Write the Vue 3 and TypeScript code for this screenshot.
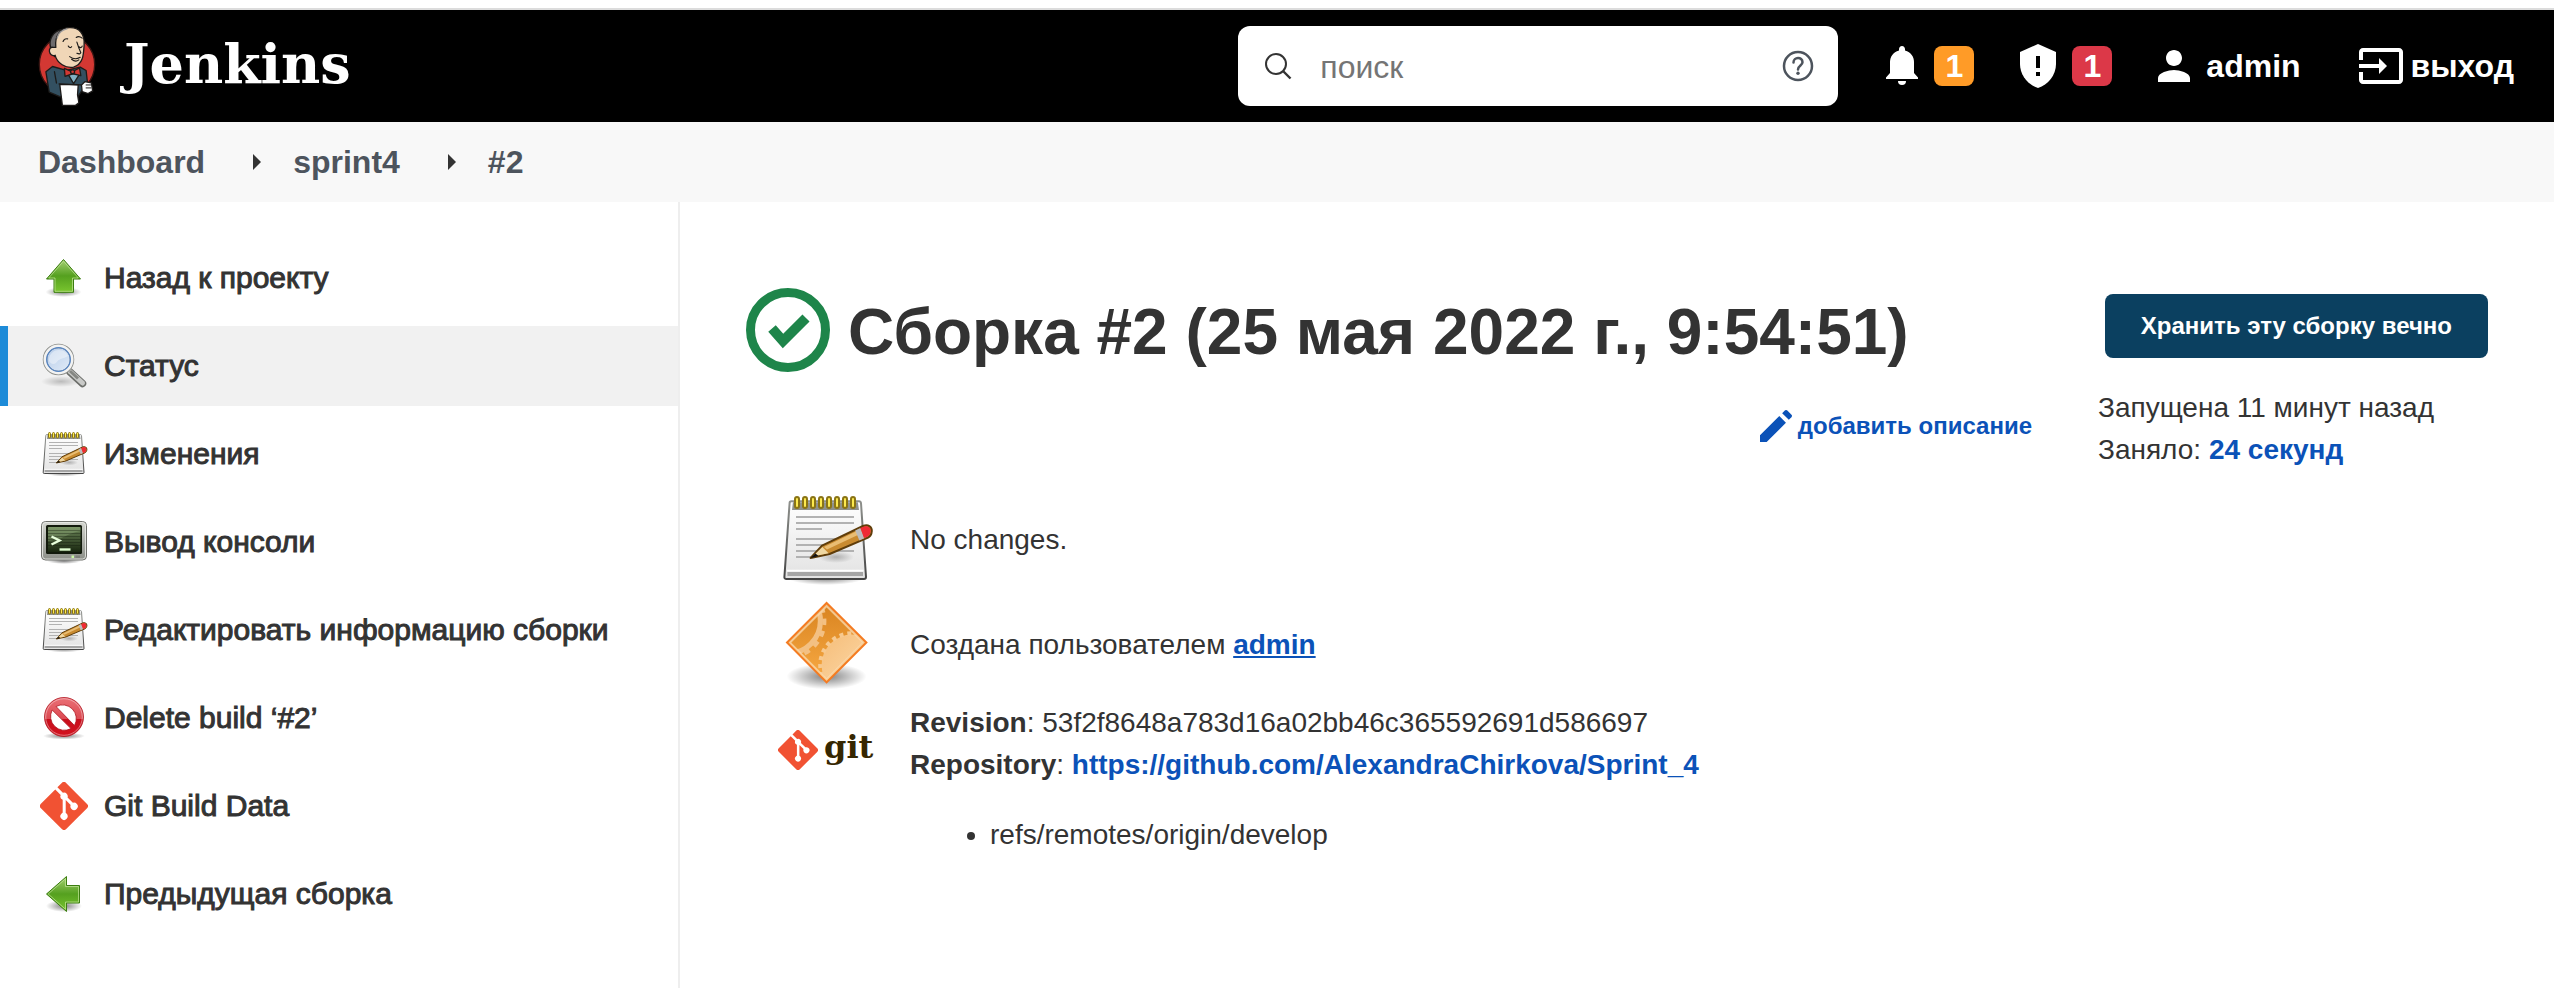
<script setup lang="ts">
import { ref } from 'vue'

interface Task {
  label: string
  icon: string
  active?: boolean
}

const query = ref<string>('')

const crumbs: string[] = ['Dashboard', 'sprint4', '#2']

const tasks: Task[] = [
  { label: 'Назад к проекту', icon: 'up' },
  { label: 'Статус', icon: 'search', active: true },
  { label: 'Изменения', icon: 'notepad' },
  { label: 'Вывод консоли', icon: 'terminal' },
  { label: 'Редактировать информацию сборки', icon: 'notepad' },
  { label: 'Delete build ‘#2’', icon: 'forbidden' },
  { label: 'Git Build Data', icon: 'git' },
  { label: 'Предыдущая сборка', icon: 'previous' },
]
</script>

<template>
  <div class="page">
    <svg class="sprite" aria-hidden="true">
      <defs>
        <linearGradient id="g-green" x1="0" y1="0" x2="0" y2="1">
          <stop offset="0" stop-color="#a5d173" />
          <stop offset=".5" stop-color="#55a01f" />
          <stop offset="1" stop-color="#7ac62f" />
        </linearGradient>
        <linearGradient id="g-lens" x1="0" y1="0" x2="1" y2="1">
          <stop offset="0" stop-color="#b5cbe8" />
          <stop offset="1" stop-color="#e3edf8" />
        </linearGradient>
        <linearGradient id="g-paper" x1="0" y1="0" x2="0" y2="1">
          <stop offset="0" stop-color="#ffffff" />
          <stop offset="1" stop-color="#e2e2e2" />
        </linearGradient>
        <linearGradient id="g-edge" x1="0" y1="0" x2="0" y2="1">
          <stop offset="0" stop-color="#8f918d" />
          <stop offset="1" stop-color="#454545" />
        </linearGradient>
        <linearGradient id="g-case" x1="0" y1="0" x2="0" y2="1">
          <stop offset="0" stop-color="#d5d7d1" />
          <stop offset="1" stop-color="#8c8f88" />
        </linearGradient>
        <linearGradient id="g-screen" x1="0" y1="0" x2="0" y2="1">
          <stop offset="0" stop-color="#6a8457" />
          <stop offset="1" stop-color="#18260f" />
        </linearGradient>
        <linearGradient id="g-red" x1="0" y1="0" x2="0" y2="1">
          <stop offset="0" stop-color="#ea7076" />
          <stop offset=".55" stop-color="#dc4a52" />
          <stop offset=".56" stop-color="#c80f1c" />
          <stop offset="1" stop-color="#d3121f" />
        </linearGradient>
        <linearGradient id="g-orange" x1="0" y1="0" x2="0" y2="1">
          <stop offset="0" stop-color="#d8831f" />
          <stop offset="1" stop-color="#f9ab45" />
        </linearGradient>
        <linearGradient id="g-gear" x1="0" y1="0" x2="1" y2="1">
          <stop offset="0" stop-color="#f5bd78" />
          <stop offset="1" stop-color="#ffe1b8" />
        </linearGradient>
        <radialGradient id="g-shadow">
          <stop offset="0" stop-color="#000" stop-opacity=".5" />
          <stop offset="1" stop-color="#000" stop-opacity="0" />
        </radialGradient>
        <clipPath id="c-diamond">
          <path d="M24.3 4.6 42.6 22.8 24.3 41.1 6 22.8Z" />
        </clipPath>
      </defs>

      <symbol id="i-up" viewBox="0 0 48 48">
        <ellipse cx="23.5" cy="38" rx="18" ry="5" fill="url(#g-shadow)" />
        <path d="M23.5 5.5 40.5 25H33.5V38.3H14V25H6.5Z" fill="url(#g-green)" stroke="#3b7d10" />
        <path d="M23.5 7.2 38.3 24H32.5V37.3H15V24H8.7Z" fill="none" stroke="#c3e59a" stroke-opacity=".7" />
      </symbol>

      <symbol id="i-previous" viewBox="0 0 48 48">
        <ellipse cx="24" cy="36" rx="18" ry="6" fill="url(#g-shadow)" />
        <path d="M6.5 24 26.5 6.5V15.5H39.5V33H26.5V41.5Z" fill="url(#g-green)" stroke="#3b7d10" />
        <path d="M8.2 24 25.5 8.7V16.5H38.5V32H25.5V39.3Z" fill="none" stroke="#c3e59a" stroke-opacity=".7" />
      </symbol>

      <symbol id="i-search" viewBox="0 0 48 48">
        <ellipse cx="21" cy="39.500" rx="20" ry="5.500" fill="url(#g-shadow)" opacity=".45" />
        <path d="M30 30 42.500 41.500" stroke="#6c6e6a" stroke-width="7.500" stroke-linecap="round" />
        <path d="M30 29.500 42.500 41" stroke="#c9cac8" stroke-width="5" stroke-linecap="round" />
        <path d="M30 29 38 36.500" stroke="#858783" stroke-width="3" />
        <circle cx="18.500" cy="17.500" r="13.500" fill="url(#g-lens)" stroke="#8a8c88" stroke-width="4.500" />
        <circle cx="18.500" cy="17.500" r="13.500" fill="none" stroke="#f3f3f2" stroke-width="3" />
        <circle cx="18.500" cy="17.500" r="11.800" fill="none" stroke="#5685c4" stroke-width="1.300" />
        <path d="M9 19a10 10 0 0 1 10-11c5 0 8 3 9 6-5 3-9 2-12 7-3 2-5 1-7-2Z" fill="#fff" opacity=".4" />
      </symbol>

      <symbol id="i-notepad" viewBox="0 0 48 48">
        <ellipse cx="24" cy="43" rx="19" ry="3.500" fill="url(#g-shadow)" />
        <path d="M6.700 4.600H40.500Q41.400 4.600 41.500 5.600L44 42.500Q44 43.500 43 43.500H4.200Q3.100 43.500 3.200 42.400L5.800 5.500Q5.800 4.600 6.700 4.600Z" fill="url(#g-paper)" stroke="url(#g-edge)" />
        <path d="M7.500 5.100H39.900L40.500 9H7Z" fill="#8f918d" />
        <path d="M4.500 39.300H42.800" stroke="#fff" stroke-width=".8" />
        <path d="M4.700 41H42.500" stroke="#a5a5a5" stroke-width="2" />
        <path d="M9 12.500H38M9 15.500H38M9 18.500H22M9 23.500H34M9 26.500H30M9 29.500H38M9 32.500H18" stroke="#b2b2b2" />
        <ellipse cx="29" cy="32.500" rx="9" ry="3" fill="url(#g-shadow)" opacity=".5" />
        <g fill="#fce94f" stroke="#8a7415">
          <rect v-for="n in 8" :key="n" :x="4.500 + n * 4" y="2.500" width="2" height="5.500" rx="1" />
        </g>
        <path d="M16.300 33 22 26.800 42.500 17C45 16 47 17.200 46.900 19.500 46.800 21.200 46 22.300 45 22.800L25.800 31Z" fill="#c98b30" stroke="#5f3d0a" stroke-linejoin="round" />
        <path d="M23 27.500 40 19.300 41 21 24.500 28.800Z" fill="#e9bd73" />
        <path d="M17.300 32.300 22.200 27.500 25.300 30.600Z" fill="#efd7a2" />
        <path d="M16.300 33 18.700 30.700 20.300 32Z" fill="#111" />
        <path d="M38.600 19.300 41.200 18 43.200 23.100 40.700 24.200Z" fill="#bcbcbc" />
        <path d="M41.200 18 43 17.300C45.200 16.600 46.400 18 46.300 19.500 46.200 21.200 45.500 22 44.700 22.400L43 23Z" fill="#ef2b35" />
      </symbol>

      <symbol id="i-terminal" viewBox="0 0 48 48">
        <ellipse cx="24" cy="43" rx="17" ry="3" fill="url(#g-shadow)" />
        <rect x="1.500" y="3.500" width="45" height="38.500" rx="4" fill="url(#g-case)" stroke="#6f716c" />
        <rect x="2.500" y="4.500" width="43" height="36.500" rx="3" fill="none" stroke="#eceeea" stroke-opacity=".8" />
        <rect x="6" y="7" width="36" height="29" rx="1.500" fill="#121a0c" />
        <rect x="8" y="9" width="32.500" height="25" rx="1" fill="url(#g-screen)" />
        <path d="M8 9H40.500V13C28 15 22 22 8 23Z" fill="#b5cf9b" opacity=".25" />
        <path d="M8 12.500H40.500M8 15.500H40.500M8 18.500H40.500M8 21.500H40.500M8 24.500H40.500M8 27.500H40.500" stroke="#0d1708" stroke-opacity=".35" />
        <path d="M11.500 18.500 19.500 22.500 11.500 26.500" fill="none" stroke="#e8ffdc" stroke-width="2.400" />
        <path d="M19.500 31.500H30.500" stroke="#e0ffd0" stroke-width="2.400" />
        <rect x="31.500" y="37.500" width="2.500" height="2.500" fill="#c8f7a2" />
        <rect x="35.500" y="37.500" width="4.500" height="2.500" fill="#7d8079" />
      </symbol>

      <symbol id="i-forbidden" viewBox="0 0 48 48">
        <ellipse cx="24" cy="42" rx="21" ry="3.500" fill="url(#g-shadow)" />
        <circle cx="24" cy="23" r="17" fill="#fff" />
        <path fill-rule="evenodd" d="M24 3.500a19.500 19.500 0 1 1 0 39 19.500 19.500 0 0 1 0-39ZM16 12.500 34.500 31.500A13.800 13.800 0 0 0 16 12.500ZM12.200 16A13.800 13.800 0 0 0 31 34.600Z" fill="url(#g-red)" stroke="#b01520" stroke-width=".8" />
        <circle cx="24" cy="23" r="18.300" fill="none" stroke="#fff" stroke-opacity=".45" stroke-width=".9" />
      </symbol>

      <symbol id="i-git" viewBox="0 0 92 92">
        <path fill="#f15233" d="M90.156 41.965 50.036 1.848a5.918 5.918 0 0 0-8.372 0l-8.328 8.332 10.566 10.566a7.030 7.030 0 0 1 7.230 1.684 7.034 7.034 0 0 1 1.669 7.277l10.187 10.184a7.028 7.028 0 0 1 7.278 1.672 7.040 7.040 0 0 1 0 9.957 7.050 7.050 0 0 1-9.965 0 7.044 7.044 0 0 1-1.528-7.660l-9.500-9.497V59.360a7.040 7.040 0 0 1 1.860 11.290 7.040 7.040 0 0 1-9.957 0 7.040 7.040 0 0 1 0-9.958 7.060 7.060 0 0 1 2.304-1.539V33.926a7.049 7.049 0 0 1-3.820-9.234L29.242 14.272 1.730 41.777a5.918 5.918 0 0 0 0 8.371L41.852 90.270a5.925 5.925 0 0 0 8.370 0l39.934-39.934a5.925 5.925 0 0 0 0-8.371Z" />
      </symbol>

      <symbol id="i-gears" viewBox="0 0 48 48">
        <ellipse cx="24.300" cy="39.700" rx="20" ry="6.500" fill="url(#g-shadow)" />
        <path d="M24.300 3 44.200 22.800 24.300 42.700 4.500 22.800Z" fill="url(#g-orange)" stroke="#f57b22" />
        <g clip-path="url(#c-diamond)" fill="none">
          <circle cx="5" cy="12" r="16.200" stroke="#f3c083" stroke-width="2.600" />
          <circle cx="5" cy="12" r="18.200" stroke="#f3c083" stroke-width="2" stroke-dasharray="3 3" stroke-dashoffset="1" />
          <circle cx="37" cy="34" r="15.200" fill="url(#g-gear)" />
          <circle cx="37" cy="34" r="15.800" stroke="#f7c98f" stroke-width="2.200" stroke-dasharray="2 2" />
        </g>
        <path d="M24.300 4.500 42.700 22.800 24.300 41.200 6 22.800Z" fill="none" stroke="#fbdcb4" stroke-opacity=".75" />
      </symbol>
    </svg>

    <header class="header">
      <a class="brand" href="#">
        <svg class="butler" viewBox="54 44 176 244" aria-hidden="true">
          <ellipse cx="142" cy="160" rx="84" ry="88" fill="#d33833" stroke="#3b1512" stroke-width="4" />
          <g stroke="#1d1b1a" stroke-width="4" stroke-linejoin="round" stroke-linecap="round">
            <path d="M98 166 78 182 88 244 122 258 176 256 204 214 200 178 182 168 140 178Z" fill="#335061" />
            <path d="M142 184 162 218 182 186Z" fill="#81b0c4" />
            <path d="M92 108C86 84 100 60 124 54L140 52 122 74 112 104 104 136Z" fill="#6d6b6d" />
            <path d="M108 108C104 72 122 50 148 48 180 46 196 68 194 100 192 130 192 158 162 168 138 172 112 156 106 132 86 138 82 104 100 108Z" fill="#f0d6b7" />
            <path d="M112 80C114 64 130 54 142 52" fill="none" stroke="#9b9a9b" />
            <path d="M130 90Q134 80 144 82M170 78Q178 72 188 80M146 104Q152 112 156 106M178 106Q186 112 188 104M172 92Q178 112 184 124 182 130 172 126M150 136Q166 148 182 138M156 144Q168 154 178 146" fill="none" stroke-width="3.500" />
            <path d="M134 172 158 182 180 170 184 194 160 188 136 196Z" fill="#d33833" />
            <circle cx="159" cy="182" r="6" fill="#d33833" />
            <path d="M104 182 110 216" fill="none" />
            <path d="M186 222 196 212 216 216 220 240 206 248 188 242Z" fill="#fff" />
            <path d="M200 222H214M200 231H215" fill="none" stroke-width="3" />
            <path d="M120 220 176 222 174 252 178 276 168 284 128 284Z" fill="#fff" />
            <path d="M118 219 184 222" fill="none" />
          </g>
        </svg>
        <span class="wordmark">Jenkins</span>
      </a>

      <form class="search" role="search" @submit.prevent>
        <svg class="search-icon" viewBox="0 0 28 28" fill="none" stroke="#333" stroke-width="2" aria-hidden="true">
          <circle cx="12" cy="12" r="10" />
          <path d="M19 19 26.500 26.500" stroke-width="2.400" />
        </svg>
        <input v-model="query" type="search" placeholder="поиск" aria-label="поиск" />
        <a class="help" href="#" aria-label="Справка">
          <svg viewBox="0 0 32 32" fill="none" stroke="#4d545d" stroke-width="2.500" aria-hidden="true">
            <circle cx="16" cy="16" r="14" />
            <path d="M11.500 12.500C11.500 6.500 20.500 6.500 20.500 12.200 20.500 15.500 16 15.500 16 19.600" stroke-linecap="round" />
            <circle cx="16" cy="23.300" r="1.700" fill="#4d545d" stroke="none" />
          </svg>
        </a>
      </form>

      <nav class="account" aria-label="Учётная запись">
        <button class="alert" type="button">
          <svg class="bell" viewBox="0 0 32 40" fill="#fff" aria-hidden="true">
            <path d="M16 0C17.800 0 19 1.500 19 3.300V4.500C25 6 28 11 28 16V27L32 31.500V33H0V31.500L4 27V16C4 11 7 6 13 4.500V3.300C13 1.500 14.200 0 16 0Z" />
            <path d="M12 35H20A4 4 0 0 1 12 35Z" />
          </svg>
          <span class="badge orange">1</span>
        </button>
        <button class="alert" type="button">
          <svg class="shield" viewBox="0 0 36 44" aria-hidden="true">
            <path d="M18 0 36 8V20C36 31 28 41 18 44 8 41 0 31 0 20V8Z" fill="#fff" />
            <path d="M16 12H20V24H16ZM16 28H20V32H16Z" fill="#000" />
          </svg>
          <span class="badge red">1</span>
        </button>
        <a class="user" href="#">
          <svg viewBox="4 4 16 16" fill="#fff" aria-hidden="true">
            <path d="M12 12c2.210 0 4-1.790 4-4s-1.790-4-4-4-4 1.790-4 4 1.790 4 4 4zm0 2c-2.670 0-8 1.340-8 4v2h16v-2c0-2.660-5.330-4-8-4z" />
          </svg>
          admin
        </a>
        <a class="logout" href="#">
          <svg viewBox="1 3 22 18" fill="#fff" aria-hidden="true">
            <path d="M21 3.010H3c-1.100 0-2 .9-2 2V9h2V4.990h18v14.030H3V15H1v4.010c0 1.100.9 1.980 2 1.980h18c1.100 0 2-.88 2-1.980v-14c0-1.110-.9-2-2-2zM11 16l4-4-4-4v3H1v2h10v3z" />
          </svg>
          выход
        </a>
      </nav>
    </header>

    <nav class="crumbs" aria-label="Путь">
      <template v-for="(crumb, i) in crumbs" :key="crumb">
        <svg v-if="i > 0" viewBox="0 0 8 16" fill="#333" aria-hidden="true"><path d="M0 0 8 8 0 16Z" /></svg>
        <a href="#">{{ crumb }}</a>
      </template>
    </nav>

    <div class="body">
      <nav class="tasks" aria-label="Меню сборки">
        <a v-for="task in tasks" :key="task.label" href="#" class="task" :class="{ active: task.active }">
          <svg aria-hidden="true"><use :href="'#i-' + task.icon" /></svg>
          {{ task.label }}
        </a>
      </nav>

      <main class="main">
        <section class="build">
          <h1>
            <svg viewBox="0 0 84 84" aria-hidden="true">
              <circle cx="42" cy="42" r="37.500" fill="none" stroke="#1e854a" stroke-width="9" />
              <path d="M26 40.500 37 53 60 30" fill="none" stroke="#1e854a" stroke-width="10" />
            </svg>
            <span>Сборка #2 (25 мая 2022 г., 9:54:51)</span>
          </h1>

          <a class="describe" href="#">
            <svg viewBox="3 3 18 18" fill="#0b52b8" aria-hidden="true">
              <path d="M3 17.250V21h3.750L17.600 10.150l-3.750-3.750L3 17.250zM20.710 7.040c.39-.39.39-1.020 0-1.410l-2.340-2.340c-.39-.39-1.020-.39-1.410 0l-1.500 1.500 3.750 3.750 1.500-1.500z" />
            </svg>
            добавить описание
          </a>

          <ul class="facts">
            <li class="fact">
              <svg aria-hidden="true"><use href="#i-notepad" /></svg>
              <p>No changes.</p>
            </li>
            <li class="fact">
              <svg aria-hidden="true"><use href="#i-gears" /></svg>
              <p>Создана пользователем <a class="underlined" href="#">admin</a></p>
            </li>
            <li class="fact source">
              <div class="git-logo">
                <svg aria-hidden="true"><use href="#i-git" /></svg>
                <span>git</span>
              </div>
              <div>
                <p><b>Revision</b>: 53f2f8648a783d16a02bb46c365592691d586697</p>
                <p><b>Repository</b>: <a href="#">https://github.com/AlexandraChirkova/Sprint_4</a></p>
                <ul class="refs">
                  <li>refs/remotes/origin/develop</li>
                </ul>
              </div>
            </li>
          </ul>
        </section>

        <aside class="meta">
          <button type="button">Хранить эту сборку вечно</button>
          <p>Запущена 11 минут назад</p>
          <p>Заняло: <a href="#">24 секунд</a></p>
        </aside>
      </main>
    </div>
  </div>
</template>

<style>
body {
  margin: 0;
  background: #fff;
}
</style>

<style scoped>
.page {
  display: flex;
  flex-direction: column;
  box-sizing: border-box;
  min-height: 100vh;
  padding-top: 8px;
  color: #333;
  font-family: "Liberation Sans", Arial, sans-serif;
  font-size: 28px;
  line-height: 42px;
}

.sprite {
  position: absolute;
  width: 0;
  height: 0;
}

a {
  color: #0b52b8;
  font-weight: bold;
  text-decoration: none;
}

p {
  margin: 0;
}

svg {
  flex: none;
}

.header {
  display: flex;
  align-items: center;
  height: 112px;
  padding: 0 40px 0 38px;
  border-top: 2px solid #dcdcdc;
  background: #000;
}

.brand {
  display: flex;
  align-items: center;
  gap: 28px;
  margin-right: auto;
  color: #fff;
}

.butler {
  width: 58px;
  height: 81px;
}

.wordmark {
  padding-bottom: 4px;
  font-family: "DejaVu Serif", serif;
  font-size: 54px;
  line-height: 64px;
}

.search {
  display: flex;
  align-items: center;
  box-sizing: border-box;
  width: 600px;
  height: 80px;
  padding: 0 24px 0 26px;
  border-radius: 12px;
  background: #fff;
}

.search-icon {
  width: 28px;
  height: 28px;
}

.search input {
  flex: 1;
  min-width: 0;
  padding: 2px 0 0 28px;
  border: 0;
  outline: 0;
  background: none;
  color: #333;
  font: 32px "Liberation Sans", Arial, sans-serif;
}

.search input::placeholder {
  color: #757575;
  opacity: 1;
}

.help,
.help svg {
  display: block;
  width: 32px;
  height: 32px;
}

.account {
  display: flex;
  align-items: center;
  margin-left: 48px;
}

.account a,
.alert {
  display: flex;
  align-items: center;
  color: #fff;
  font-size: 32px;
  line-height: 40px;
}

.alert {
  gap: 16px;
  margin-right: 46px;
  padding: 0;
  border: 0;
  background: none;
  font-family: inherit;
  font-weight: bold;
}

.bell {
  width: 32px;
  height: 40px;
}

.shield {
  width: 36px;
  height: 44px;
}

.badge {
  width: 40px;
  border-radius: 8px;
  text-align: center;
}

.orange {
  background: #ff9b27;
}

.red {
  background: #dc3848;
}

.account .user {
  gap: 16px;
  margin-right: 58px;
}

.user svg {
  width: 32px;
  height: 32px;
}

.account .logout {
  gap: 8px;
}

.logout svg {
  width: 44px;
  height: 36px;
}

.crumbs {
  display: flex;
  align-items: center;
  height: 80px;
  padding: 0 38px;
  background: #f8f8f8;
}

.crumbs a {
  color: #4d545d;
  font-size: 32px;
}

.crumbs svg {
  width: 8px;
  height: 16px;
  margin: 0 32px 0 48px;
}

.body {
  display: flex;
  flex: 1;
}

.tasks {
  display: flex;
  flex: none;
  flex-direction: column;
  gap: 8px;
  box-sizing: border-box;
  width: 680px;
  padding-top: 36px;
  border-right: 2px solid #eee;
}

.task {
  display: flex;
  align-items: center;
  gap: 16px;
  height: 80px;
  padding-left: 32px;
  border-left: 8px solid transparent;
  color: #333;
  font-size: 30px;
  font-weight: normal;
  -webkit-text-stroke: 1px #333;
}

.task svg {
  width: 48px;
  height: 48px;
}

.task.active {
  border-left-color: #1d8bd8;
  background: #f1f1f1;
}

.main {
  display: flex;
  flex: 1;
  gap: 66px;
  padding: 0 66px;
}

.build {
  display: flex;
  flex: 1;
  flex-direction: column;
  align-items: flex-start;
  padding-top: 84px;
}

h1 {
  display: flex;
  align-items: center;
  gap: 18px;
  height: 88px;
  margin: 0;
  font-size: 64px;
  line-height: 84px;
  white-space: nowrap;
}

h1 span {
  padding-top: 4px;
}

h1 svg {
  width: 84px;
  height: 84px;
}

.describe {
  display: flex;
  align-items: center;
  align-self: flex-end;
  gap: 6px;
  margin-top: 32px;
  font-size: 24px;
  line-height: 40px;
}

.describe svg {
  width: 32px;
  height: 32px;
}

.facts {
  margin: 46px 0 0;
  padding: 0 0 0 32px;
  list-style: none;
}

.fact {
  display: flex;
  align-items: center;
  gap: 36px;
  margin-bottom: 9px;
}

.fact > svg {
  width: 96px;
  height: 96px;
}

.source {
  align-items: flex-start;
}

.git-logo {
  display: flex;
  align-items: center;
  gap: 6px;
  width: 96px;
  height: 96px;
  color: #362701;
  font: bold 32px/40px "DejaVu Serif", serif;
}

.git-logo svg {
  width: 40px;
  height: 40px;
}

.git-logo span {
  padding-bottom: 6px;
}

.underlined {
  text-decoration: underline;
}

.refs {
  margin: 28px 0;
  padding-left: 80px;
  list-style: disc;
}

.meta {
  display: flex;
  flex: none;
  flex-direction: column;
  width: 390px;
  padding-top: 92px;
}

.meta button {
  align-self: flex-end;
  height: 64px;
  margin-bottom: 29px;
  padding: 0 36px;
  border: 0;
  border-radius: 8px;
  background: #0b4060;
  color: #fff;
  font: bold 24px "Liberation Sans", Arial, sans-serif;
}
</style>
